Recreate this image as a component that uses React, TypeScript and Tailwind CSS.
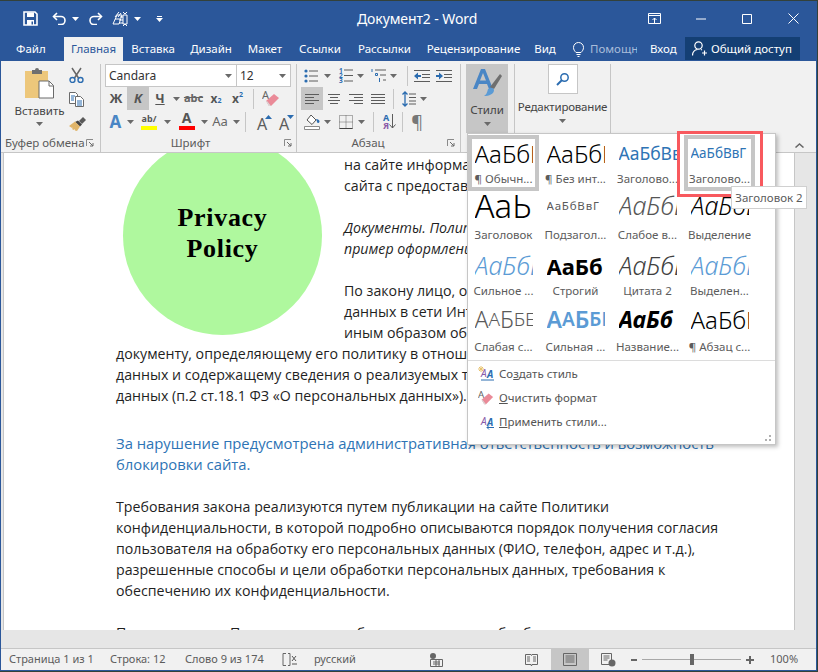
import type { ReactNode } from "react";

const UI = "font-['Noto_Sans',sans-serif]";

const Caret = ({ light = false }: { light?: boolean }) => (
  <svg width="7" height="4" viewBox="0 0 7 4" className="shrink-0">
    <path d="M0 0h7L3.5 4z" fill={light ? "#ffffff" : "#6a6a6a"} />
  </svg>
);

const Launcher = () => (
  <svg width="8" height="8" viewBox="0 0 8 8" className="shrink-0">
    <path d="M.5 7V.5H7" fill="none" stroke="#8a8a8a" />
    <path d="M3 3l4 4M7 4v3H4" fill="none" stroke="#6a6a6a" />
  </svg>
);

const Sep = ({ h = "h-[20px]" }: { h?: string }) => <div className={`w-px shrink-0 bg-[#c6c6c6] ${h}`} />;

function Lines({ kind }: { kind: "left" | "center" | "right" | "justify" }) {
  const rows: [number, number][] = {
    left: [[0, 14], [0, 9], [0, 14], [0, 9]],
    center: [[1, 13], [3, 11], [1, 13], [3, 11]],
    right: [[0, 14], [5, 14], [0, 14], [5, 14]],
    justify: [[0, 14], [0, 14], [0, 14], [0, 14]],
  }[kind] as [number, number][];
  return (
    <svg width="14" height="12" viewBox="0 0 14 12">
      {rows.map(([a, b], i) => (
        <path key={i} d={`M${a} ${1.5 + i * 3}H${b}`} stroke="#5c5c5c" />
      ))}
    </svg>
  );
}

const SaveIcon = () => (
  <svg width="15" height="15" viewBox="0 0 15 15">
    <path d="M1 1h11l2 2v11H1z" fill="none" stroke="#fff" strokeWidth="1.6" />
    <path d="M4 1.5h7V6H4zM4 9h7v5H4z" fill="#fff" />
    <path d="M8.5 10.5h1.5v3H8.5z" fill="#2b579a" />
  </svg>
);

const UndoIcon = () => (
  <svg width="15" height="13" viewBox="0 0 15 13">
    <path d="M5 1L1.5 4.5 5 8" fill="none" stroke="#fff" strokeWidth="1.6" />
    <path d="M2 4.5h7a4 4 0 0 1 0 8H6" fill="none" stroke="#fff" strokeWidth="1.6" />
  </svg>
);

const RedoIcon = () => (
  <svg width="15" height="13" viewBox="0 0 15 13">
    <path d="M10 1l3.5 3.5L10 8" fill="none" stroke="#fff" strokeWidth="1.6" />
    <path d="M13 4.5H6a4 4 0 0 0 0 8h3" fill="none" stroke="#fff" strokeWidth="1.6" />
  </svg>
);

const TouchIcon = () => (
  <svg width="18" height="16" viewBox="0 0 18 16">
    <path d="M1 13l4-9h5l-3 9zM3 8h5" fill="none" stroke="#fff" />
    <path d="M7 1L3 6M9 2L6 6" stroke="#fff" />
    <path d="M11 4h4v9h-4zM11 1l2 2 2-2M11 15l2-2 2 2" fill="none" stroke="#fff" />
    <path d="M8 6h3M7 9h4M7 12h4" stroke="#fff" />
  </svg>
);

const ScissorsIcon = () => (
  <svg width="15" height="16" viewBox="0 0 15 16">
    <path d="M3 1l6.5 10M12 1L5.500 11" stroke="#666" strokeWidth="1.500" />
    <circle cx="3.500" cy="13" r="2.500" fill="none" stroke="#2b6cb0" strokeWidth="1.400" />
    <circle cx="11.500" cy="13" r="2.500" fill="none" stroke="#2b6cb0" strokeWidth="1.400" />
  </svg>
);

const CopyIcon = () => (
  <svg width="15" height="15" viewBox="0 0 15 15">
    <path d="M.5.500h6l2 2v9H.500z" fill="#fff" stroke="#6a6a6a" />
    <path d="M6.500 4.500h5l3 3v7h-8z" fill="#fff" stroke="#6a6a6a" />
    <path d="M2 4h4M2 6h3M2 8h3M8 9h5M8 11h5M8 13h5" stroke="#2b6cb0" />
  </svg>
);

const PainterIcon = () => (
  <svg width="17" height="14" viewBox="0 0 17 14">
    <path d="M10 4l3 3 4-4-3-3z" fill="#5a5a5a" />
    <path d="M9 3.500l4 4-2 2L6 5z" fill="#444" />
    <path d="M6 4.500l5 5-3 4.500-2-.500-.500-1.500-1 1-1.500-1 1-1.500-1 .500L0 9z" fill="#e0b56a" />
  </svg>
);

const PasteIcon = () => (
  <svg width="29" height="31" viewBox="0 0 29 31">
    <path d="M0 3h23v27H0z" fill="#edc77b" />
    <path d="M7 2h3a2 2 0 0 1 4 0h3v4H7z" fill="#6f6f6f" />
    <path d="M14 13h10l4.500 4.500V30H14z" fill="#fff" stroke="#6a6a6a" />
    <path d="M24 13v5h4.500" fill="none" stroke="#6a6a6a" />
  </svg>
);

const Eraser = ({ size = 18 }: { size?: number }) => (
  <svg width={size} height={size} viewBox="0 0 18 18">
    <text x="0" y="9" fontSize="11" fontFamily="Noto Sans, sans-serif" fill="#666">A</text>
    <path d="M4 11l8-7 5 4-8 8H7z" fill="#ea8a98" />
    <path d="M4 11l3 5h2l-4-5z" fill="#d9d9d9" />
  </svg>
);

const GrowIcon = ({ up }: { up: boolean }) => (
  <div className="relative flex h-[22px] w-[20px] items-end justify-center pb-[1px] text-[16px] leading-none text-[#5c5c5c]">
    A
    <svg width="7" height="4" viewBox="0 0 7 4" className="absolute right-0 top-[4px]">
      <path d={up ? "M0 4h7L3.500 0z" : "M0 0h7L3.500 4z"} fill="#2b6cb0" />
    </svg>
  </div>
);

const BulletIcon = () => (
  <svg width="14" height="14" viewBox="0 0 14 14">
    <circle cx="2" cy="2" r="1.600" fill="#2b6cb0" />
    <circle cx="2" cy="7" r="1.600" fill="#2b6cb0" />
    <circle cx="2" cy="12" r="1.600" fill="#2b6cb0" />
    <path d="M5 2h9M5 7h9M5 12h9" stroke="#5c5c5c" />
  </svg>
);

const NumberIcon = () => (
  <div className="flex h-[15px] w-[14px] items-stretch justify-between">
    <div className="flex flex-col justify-between text-[6.500px] font-bold leading-[5px] text-[#2b6cb0]">
      <span>1</span>
      <span>2</span>
      <span>3</span>
    </div>
    <svg width="9" height="15" viewBox="0 0 9 15">
      <path d="M0 2h9M0 7.500h9M0 13h9" stroke="#5c5c5c" />
    </svg>
  </div>
);

const MultiIcon = () => (
  <svg width="15" height="15" viewBox="0 0 15 15">
    <path d="M1 1v3M4.500 5.500h2v2h-2zM8.500 10v4" stroke="#2b6cb0" fill="none" />
    <path d="M4 2h11M9 7h6M12 12h3" stroke="#5c5c5c" />
  </svg>
);

const IndentIcon = ({ out }: { out: boolean }) => (
  <svg width="16" height="12" viewBox="0 0 16 12">
    <path d="M0 .500h16M8 4.500h8M8 7.500h8M0 11.500h16" stroke="#5c5c5c" />
    {out ? (
      <path d="M0 6l4-3.500V5h3v2H4v2.500z" fill="#2b6cb0" />
    ) : (
      <path d="M7 6L3 2.500V5H0v2h3v2.500z" fill="#2b6cb0" />
    )}
  </svg>
);

const SpacingIcon = () => (
  <svg width="14" height="16" viewBox="0 0 14 16">
    <path d="M3 1v14M.500 3.500L3 1l2.500 2.500M.500 12.500L3 15l2.500-2.500" fill="none" stroke="#2b6cb0" strokeWidth="1.300" />
    <path d="M7 3h7M7 6.500h7M7 10h7M7 13h7" stroke="#5c5c5c" />
  </svg>
);

const ShadingIcon = () => (
  <svg width="16" height="16" viewBox="0 0 16 16">
    <path d="M3 6l4-5 5 5-4 4.500z" fill="#fff" stroke="#555" />
    <path d="M12 5c2 0 3.500 1 3.500 2.500 0 1-1 1.500-2 1.500z" fill="#2b6cb0" />
    <path d="M.500 12.500h15v3H.500z" fill="#fff" stroke="#8a8a8a" />
  </svg>
);

const BordersIcon = () => (
  <svg width="14" height="14" viewBox="0 0 14 14">
    <path d="M.500.500h13v13H.500zM7 .500v13M.500 7h13" fill="none" stroke="#666" strokeDasharray="1 1" />
    <path d="M.500 13.500h13" stroke="#444" />
  </svg>
);

const StylesIcon = () => (
  <svg width="29" height="32" viewBox="0 0 29 32">
    <path d="M0 21L8 1h4l8 20h-4l-2-5H6l-2 5zM7 12.500h6L10 5z" fill="#4a86c5" />
    <path d="M17 19L27 6l2 2-8 13z" fill="#6f6f6f" />
    <path d="M15 21c3-2 6-1 6 1 0 4-5 6-10 6 2-1 3-3 4-7z" fill="#5b9bd5" />
  </svg>
);

const SearchIcon = () => (
  <svg width="14" height="14" viewBox="0 0 14 14">
    <circle cx="8.500" cy="5.500" r="3.700" fill="none" stroke="#2b6cb0" strokeWidth="1.500" />
    <path d="M6 8l-5 5" stroke="#2b6cb0" strokeWidth="2" />
  </svg>
);

function FontGroup() {
  return (
    <div className="flex w-[196px] shrink-0 flex-col border-r border-[#c6c6c6] pl-[4px]">
      <div className="flex h-[23px]">
        <div className="flex h-[23px] w-[132px] items-center justify-between border border-[#c6c6c6] bg-white pl-[3px] pr-[4px] text-[12px] text-[#333]">
          Candara
          <Caret />
        </div>
        <div className="-ml-px flex h-[23px] w-[55px] items-center justify-between border border-[#c6c6c6] bg-white pl-[3px] pr-[4px] text-[12px] text-[#333]">
          12
          <Caret />
        </div>
      </div>
      <div className="flex h-[23px] items-center">
        <div className="flex h-full w-[22px] items-center justify-center text-[13px] font-bold text-[#555]">Ж</div>
        <div className="flex h-full w-[22px] items-center justify-center bg-[#c6c6c6] text-[13px] font-bold italic text-[#555]">К</div>
        <div className="flex h-full w-[22px] items-center justify-center text-[13px] font-bold text-[#555] underline">Ч</div>
        <div className="flex w-[10px] justify-center"><Caret /></div>
        <div className="flex h-full w-[25px] items-center justify-center text-[11px] font-bold text-[#666] line-through">abc</div>
        <div className="flex h-full w-[20px] items-center justify-center text-[12px] font-bold text-[#555]">
          x<span className="mt-[6px] text-[7px] text-[#2b6cb0]">2</span>
        </div>
        <div className="flex h-full w-[23px] items-center justify-center text-[12px] font-bold text-[#555]">
          x<span className="-mt-[6px] text-[7px] text-[#2b6cb0]">2</span>
        </div>
        <div className="ml-[4px] mr-[8px]"><Sep /></div>
        <Eraser />
      </div>
      <div className="flex h-[23px] items-center">
        <div className="flex h-full w-[21px] items-center justify-center text-[17px] font-bold text-[#4a86c5]">A</div>
        <div className="flex w-[8px] justify-center"><Caret /></div>
        <div className="flex h-full w-[30px] flex-col items-center justify-end pb-[3px]">
          <div className="flex h-[11px] items-center text-[9px] font-bold leading-none text-[#555]">ab/</div>
          <div className="mt-[2px] h-[4px] w-[16px] bg-[#ffff00]" />
        </div>
        <div className="flex w-[6px] justify-center"><Caret /></div>
        <div className="flex h-full w-[31px] flex-col items-center justify-end pb-[3px] pl-[2px]">
          <div className="text-[14px] font-bold leading-[14px] text-[#555]">A</div>
          <div className="mt-[1px] h-[4px] w-[16px] bg-[#ff0000]" />
        </div>
        <div className="flex w-[6px] justify-center"><Caret /></div>
        <div className="flex h-full w-[26px] items-center justify-center text-[13px] text-[#666]">Aa</div>
        <div className="flex w-[6px] justify-center"><Caret /></div>
        <div className="ml-[6px] mr-[6px]"><Sep /></div>
        <GrowIcon up />
        <div className="w-[2px]" />
        <GrowIcon up={false} />
      </div>
      <div className="mt-auto flex h-[18px] items-center">
        <span className="flex-1 pr-[8px] text-center text-[11.500px] text-[#5c5c5c]">Шрифт</span>
        <span className="pr-[4px]"><Launcher /></span>
      </div>
    </div>
  );
}

function ParagraphGroup() {
  return (
    <div className="flex w-[164px] shrink-0 flex-col border-r border-[#c6c6c6] pl-[4px]">
      <div className="flex h-[23px] items-center">
        <div className="flex w-[17px] justify-end"><BulletIcon /></div>
        <div className="flex w-[13px] justify-end"><Caret /></div>
        <div className="flex w-[22px] justify-end"><NumberIcon /></div>
        <div className="flex w-[11px] justify-end"><Caret /></div>
        <div className="flex w-[22px] justify-end"><MultiIcon /></div>
        <div className="flex w-[11px] justify-end"><Caret /></div>
        <div className="ml-[10px] mr-[6px]"><Sep /></div>
        <IndentIcon out />
        <div className="w-[6px]" />
        <IndentIcon out={false} />
      </div>
      <div className="flex h-[23px] items-center">
        <div className="flex h-full w-[22px] items-center justify-center bg-[#c6c6c6]"><Lines kind="left" /></div>
        <div className="flex h-full w-[22px] items-center justify-center"><Lines kind="center" /></div>
        <div className="flex h-full w-[22px] items-center justify-center"><Lines kind="right" /></div>
        <div className="flex h-full w-[22px] items-center justify-center"><Lines kind="justify" /></div>
        <div className="ml-[4px] mr-[8px]"><Sep /></div>
        <SpacingIcon />
        <div className="flex w-[11px] justify-end"><Caret /></div>
      </div>
      <div className="flex h-[23px] items-center">
        <div className="flex w-[19px] justify-end"><ShadingIcon /></div>
        <div className="flex w-[11px] justify-end"><Caret /></div>
        <div className="flex w-[22px] justify-end"><BordersIcon /></div>
        <div className="flex w-[12px] justify-end"><Caret /></div>
        <div className="ml-[8px] mr-[9px]"><Sep /></div>
        <div className="flex items-center">
          <div className="flex flex-col text-[9px] font-bold leading-[8px]">
            <span className="text-[#2b6cb0]">А</span>
            <span className="text-[#8a5aa8]">Я</span>
          </div>
          <svg width="7" height="15" viewBox="0 0 7 15">
            <path d="M3.500 0v14M.500 10.500l3 3.500 3-3.500" fill="none" stroke="#5c5c5c" />
          </svg>
        </div>
        <div className="ml-[6px] mr-[8px]"><Sep /></div>
        <span className="text-[18px] leading-none text-[#777]">¶</span>
      </div>
      <div className="mt-auto flex h-[18px] items-center">
        <span className="flex-1 pr-[12px] text-center text-[11.500px] text-[#5c5c5c]">Абзац</span>
        <span className="pr-[5px]"><Launcher /></span>
      </div>
    </div>
  );
}

function Ribbon() {
  return (
    <div className="flex h-[92px] shrink-0 border-b border-[#c6c6c6] bg-[#f1f1f1] pb-[0px] pt-[3px] text-[#444]">
      <div className="flex w-[100px] shrink-0 flex-col border-r border-[#c6c6c6]">
        <div className="flex h-[70px]">
          <div className="flex w-[66px] flex-col items-center pl-[11px] pt-[4px]">
            <PasteIcon />
            <span className="mt-[4px] text-[11.500px] leading-[16px]">Вставить</span>
            <span className="mt-[3px]"><Caret /></span>
          </div>
          <div className="flex flex-1 flex-col items-start gap-[9px] pl-[2px] pt-[3px]">
            <ScissorsIcon />
            <CopyIcon />
            <span className="mt-[1px]"><PainterIcon /></span>
          </div>
        </div>
        <div className="mt-auto flex h-[18px] items-center justify-between pl-[4px] pr-[6px]">
          <span className="whitespace-nowrap text-[11.500px] text-[#5c5c5c]">Буфер обмена</span>
          <Launcher />
        </div>
      </div>
      <FontGroup />
      <ParagraphGroup />
      <div className="flex w-[54px] shrink-0 flex-col border-r border-[#c6c6c6] pl-[5px]">
        <div className="flex h-[69px] w-[42px] flex-col items-center bg-[#c6c6c6] pt-[4px]">
          <StylesIcon />
          <span className="mt-[2px] text-[11.500px] leading-[16px]">Стили</span>
          <span className="mt-[4px]"><Caret /></span>
        </div>
      </div>
      <div className="flex w-[96px] shrink-0 flex-col items-center border-r border-[#c6c6c6]">
        <div className="flex h-[30px] w-[30px] items-center justify-center border border-[#c6c6c6] bg-white">
          <SearchIcon />
        </div>
        <span className="mt-[5px] text-[11.500px] leading-[16px] tracking-[-0.2px]">Редактирование</span>
        <span className="mt-[4px]"><Caret /></span>
      </div>
      <div className="flex flex-1 items-end justify-end pb-[4px] pr-[12px]">
        <svg width="9" height="5" viewBox="0 0 9 5">
          <path d="M.500 4.500l4-3.500 4 3.500" fill="none" stroke="#666" strokeWidth="1.500" />
        </svg>
      </div>
    </div>
  );
}

type Style = { sample: ReactNode; label: string; cls: string };

const STYLES: Style[] = [
  { sample: "АаБбВвГг", label: "¶ Обычн...", cls: "text-[24px] font-light text-black" },
  { sample: "АаБбВвГг", label: "¶ Без инт...", cls: "text-[24px] font-light text-black" },
  { sample: "АаБбВв", label: "Заголово...", cls: "text-[17.500px] text-[#2e74b5]" },
  { sample: "АаБбВвГ", label: "Заголово...", cls: "text-[13.500px] text-[#2e74b5]" },
  { sample: "АаЬ", label: "Заголовок", cls: "-mt-[4px] text-[33px] font-light text-black" },
  { sample: "АаБбВвГ", label: "Подзагол...", cls: "-mt-[4px] text-[11.500px] tracking-[0.8px] text-[#5a5a5a]" },
  { sample: "АаБбВв", label: "Слабое в...", cls: "-mt-[4px] text-[25px] font-light italic text-[#555]" },
  { sample: "АаБбВв", label: "Выделение", cls: "-mt-[4px] text-[25px] font-light italic text-black" },
  { sample: "АаБбВв", label: "Сильное ...", cls: "text-[25px] font-light italic text-[#5b9bd5]" },
  { sample: "АаБб", label: "Строгий", cls: "text-[22px] font-bold text-black" },
  { sample: "АаБбВв", label: "Цитата 2", cls: "text-[25px] font-light italic text-[#404040]" },
  { sample: "АаБбВв", label: "Выделен...", cls: "text-[25px] font-light italic text-[#5b9bd5]" },
  {
    sample: (
      <>
        А<span className="text-[19px]">А</span>Б<span className="text-[19px]">БЕ</span>
      </>
    ),
    label: "Слабая с...",
    cls: "-mt-[2px] text-[23px] font-light text-[#5a5a5a]",
  },
  {
    sample: (
      <>
        А<span className="text-[19px]">А</span>Б<span className="text-[19px]">БЕ</span>
      </>
    ),
    label: "Сильная ...",
    cls: "-mt-[2px] text-[23px] font-semibold text-[#5b9bd5]",
  },
  { sample: "АаБб", label: "Название...", cls: "-mt-[2px] text-[23px] font-bold italic text-black" },
  { sample: "АаБбВвГг", label: "¶ Абзац с...", cls: "-mt-[2px] text-[24px] font-light text-black" },
];

function StyleCell({ style, index }: { style: Style; index: number }) {
  const selected = index === 0;
  const hovered = index === 3;
  return (
    <div
      className={`relative flex h-[56px] w-[71px] flex-col items-center overflow-hidden px-[4px] pb-[1px] ${
        selected || hovered ? "border-[4px] border-[#c6c6c6]" : "border-[4px] border-transparent"
      }`}
    >
      <div className={`flex h-[29px] w-[58px] shrink-0 items-center overflow-hidden whitespace-nowrap leading-none ${style.cls}`}>
        {style.sample}
      </div>
      <div className="mt-auto w-[64px] whitespace-nowrap text-center text-[11.500px] leading-[15px] text-[#5c5c5c]">
        {style.label}
      </div>
    </div>
  );
}

function MenuItem({ icon, children }: { icon: ReactNode; children: ReactNode }) {
  return (
    <div className="flex h-[24px] items-center">
      <div className="flex w-[31px] justify-center pl-[4px]">{icon}</div>
      <span className="text-[11.500px] text-[#555]">{children}</span>
    </div>
  );
}

function StyleIcon({ badge }: { badge: "new" | "apply" }) {
  return (
    <svg width="16" height="16" viewBox="0 0 16 16">
      {badge === "new" && <path d="M3 0v6M0 3h6M1 1l4 4M5 1L1 5" stroke="#e8c26d" />}
      <text x="3" y="11" fontSize="10" fontStyle="italic" fill="#8a5aa8" fontFamily="Noto Sans, sans-serif">A</text>
      <text x="9" y="12" fontSize="10" fontWeight="700" fontStyle="italic" fill="#2b6cb0" fontFamily="Noto Sans, sans-serif">A</text>
      {badge === "new" ? (
        <path d="M3 14h13" stroke="#2b6cb0" />
      ) : (
        <path d="M16 13.500H9M11 11.500l-2 2 2 2" fill="none" stroke="#2b6cb0" />
      )}
    </svg>
  );
}

function Gallery() {
  return (
    <div className={`absolute left-[467px] top-[133px] z-10 w-[309px] border border-[#c6c6c6] bg-white shadow-[2px_2px_4px_rgba(0,0,0,0.25)] ${UI}`}>
      <div className="grid grid-cols-[72px_72px_72px_72px] gap-y-[0px] pt-[1px]">
        {STYLES.map((s, i) => (
          <StyleCell key={i} style={s} index={i} />
        ))}
      </div>
      <div className="mt-[1px] border-t border-[#dcdcdc] pb-[10px] pt-px">
        <MenuItem icon={<StyleIcon badge="new" />}>
          Со<span className="underline">з</span>дать стиль
        </MenuItem>
        <MenuItem icon={<Eraser size={16} />}>
          <span className="underline">О</span>чистить формат
        </MenuItem>
        <MenuItem icon={<StyleIcon badge="apply" />}>
          <span className="underline">П</span>рименить стили...
        </MenuItem>
      </div>
      <div className="absolute bottom-[3px] right-[4px] grid grid-cols-2 gap-[2px]">
        <span />
        <span className="h-[2px] w-[2px] bg-[#b0b0b0]" />
        <span className="h-[2px] w-[2px] bg-[#b0b0b0]" />
        <span className="h-[2px] w-[2px] bg-[#b0b0b0]" />
      </div>
      <div className="absolute left-[209px] top-[-3px] h-[66px] w-[86px] border-[3px] border-[#f8595e]" />
      <div className="absolute left-[263px] top-[52px] flex h-[23px] w-[76px] items-center justify-center border border-[#d0d0d0] bg-white text-[11.500px] text-[#5c5c5c]">
        Заголовок 2
      </div>
    </div>
  );
}

function Doc() {
  return (
    <div className="relative flex-1 overflow-hidden bg-[#e6e6e6] pl-[2px] pr-[21px]">
      <div className="h-[477px] overflow-hidden border-l border-r border-[#c6c6c6] bg-white pl-[112px] pt-px font-['Open_Sans',sans-serif] text-[14.200px] leading-[21px] text-[#1f1f1f] [&_p]:whitespace-nowrap">
        <div className="flex h-[189px]">
          <div className="w-[228px] shrink-0 pl-[7px]">
            <div className="-mt-[18px] flex h-[199px] w-[199px] flex-col items-center justify-center rounded-full bg-[#aff89e] pb-[5px] font-['Liberation_Serif',serif] text-[26px] font-bold leading-[31px] tracking-[0.7px] text-black">
              <span>Privacy</span>
              <span>Policy</span>
            </div>
          </div>
          <div>
            <p>на сайте информацию о своей деятельности и об</p>
            <p>сайта с предоставлением документов</p>
            <p>&nbsp;</p>
            <p className="italic">Документы. Политика конфиденциальности</p>
            <p className="italic">пример оформления документа</p>
            <p>&nbsp;</p>
            <p>По закону лицо, осуществляющее сбор</p>
            <p>данных в сети Интернет, обязано</p>
            <p>иным образом обеспечить доступ к</p>
          </div>
        </div>
        <p>документу, определяющему его политику в отношении обработки персональных</p>
        <p>данных и содержащему сведения о реализуемых требованиях к защите персональных</p>
        <p>данных (п.2 ст.18.1 ФЗ «О персональных данных»).</p>
        <p>&nbsp;</p>
        <p className="mt-[6px] text-[14.800px] text-[#2e74b5]">За нарушение предусмотрена административная ответственность и возможность</p>
        <p className="text-[14.800px] text-[#2e74b5]">блокировки сайта.</p>
        <p>&nbsp;</p>
        <p>Требования закона реализуются путем публикации на сайте Политики</p>
        <p>конфиденциальности, в которой подробно описываются порядок получения согласия</p>
        <p>пользователя на обработку его персональных данных (ФИО, телефон, адрес и т.д.),</p>
        <p>разрешенные способы и цели обработки персональных данных, требования к</p>
        <p>обеспечению их конфиденциальности.</p>
        <p>&nbsp;</p>
        <p>Прежде всего, в Политике должна быть указана цель обработки данных</p>
      </div>
    </div>
  );
}

function StatusBar() {
  return (
    <div className="flex h-[22px] shrink-0 items-center border-t border-[#c6c6c6] bg-[#f1f1f1] pl-[8px] text-[11px] text-[#5c5c5c]">
      <span className="w-[101px]">Страница 1 из 1</span>
      <span className="w-[75px]">Строка: 12</span>
      <span className="w-[97px]">Слово 9 из 174</span>
      <svg width="15" height="13" viewBox="0 0 15 13" className="mr-[17px]">
        <path d="M4 .500H1v12h3M6 .500h2v12H6" fill="none" stroke="#666" />
        <path d="M10 3l4 5M14 3l-4 5M10 11h5" stroke="#555" />
      </svg>
      <span className="w-[116px]">русский</span>
      <svg width="13" height="14" viewBox="0 0 13 14" className="mr-[82px]">
        <circle cx="3" cy="3" r="3" fill="#666" />
        <path d="M.500 6.500h12v7H.500zM3 9h7M3 11h7M6 7v6M9 7v6" fill="none" stroke="#666" />
      </svg>
      <svg width="13" height="14" viewBox="0 0 13 14" className="mr-[13px]">
        <path d="M.500 1.500h5.500l.500 1 .500-1h5.500v10H7l-.500 1.500-.500-1.500H.500z" fill="none" stroke="#666" />
        <path d="M2 4h3M2 6h3M2 8h3M8 4h3M8 6h3M8 8h3" stroke="#666" />
      </svg>
      <div className="flex h-full w-[38px] items-center justify-center bg-[#c6c6c6]">
        <svg width="14" height="13" viewBox="0 0 14 13">
          <path d="M.500.500h13v12H.500z" fill="none" stroke="#666" />
          <path d="M2.500 3h9M2.500 5h9M2.500 7h9M2.500 9h9" stroke="#666" />
        </svg>
      </div>
      <svg width="15" height="14" viewBox="0 0 15 14" className="ml-[12px] mr-[15px]">
        <path d="M.500.500h10v11H.500zM2.500 3h6M2.500 5h6M2.500 7h4" fill="none" stroke="#666" />
        <circle cx="11" cy="10" r="3.500" fill="#666" />
      </svg>
      <div className="h-[2px] w-[6px] bg-[#666]" />
      <div className="relative mx-[5px] h-px w-[99px] bg-[#a8a8a8]">
        <div className="absolute left-[48px] top-[-5px] h-[11px] w-[4px] bg-[#666]" />
      </div>
      <div className="relative h-[8px] w-[8px]">
        <div className="absolute left-0 top-[3px] h-[2px] w-[8px] bg-[#666]" />
        <div className="absolute left-[3px] top-0 h-[8px] w-[2px] bg-[#666]" />
      </div>
      <span className="ml-[16px]">100%</span>
    </div>
  );
}

const TABS: [string, string][] = [
  ["Вставка", "w-[60px]"],
  ["Дизайн", "w-[56px]"],
  ["Макет", "w-[52px]"],
  ["Ссылки", "w-[58px]"],
  ["Рассылки", "w-[71px]"],
  ["Рецензирование", "w-[107px]"],
  ["Вид", "w-[36px]"],
];

export default function App() {
  return (
    <div className={`relative flex h-[672px] w-[818px] flex-col overflow-hidden bg-[#33413a] pb-[1px] pt-px ${UI}`}>
      <div className="mr-px flex min-h-0 flex-1 flex-col border-b border-l border-r border-[#2b579a]">
        <div className="flex h-[35px] shrink-0 items-center bg-[#2b579a] text-white">
          <div className="flex w-[356px] shrink-0 items-center pl-[22px]">
            <div className="w-[29px]"><SaveIcon /></div>
            <UndoIcon />
            <span className="ml-[5px] mr-[9px]"><Caret light /></span>
            <RedoIcon />
            <span className="ml-[9px]"><TouchIcon /></span>
            <span className="ml-[4px]"><Caret light /></span>
            <span className="ml-[15px] flex flex-col items-center gap-[1px]">
              <span className="h-px w-[5px] bg-white" />
              <Caret light />
            </span>
          </div>
          <span className="w-[291px] shrink-0 text-[14px] tracking-[-0.1px]">Документ2 - Word</span>
          <svg width="13" height="12" viewBox="0 0 13 12" className="shrink-0">
            <path d="M.500.500h12v10H.500zM.500 2.500h12M6.500 10V5M4.500 7l2-2 2 2" fill="none" stroke="#fff" />
          </svg>
          <svg width="10" height="2" viewBox="0 0 10 2" className="ml-[35px] shrink-0"><path d="M0 1h10" stroke="#fff" /></svg>
          <svg width="10" height="10" viewBox="0 0 10 10" className="ml-[36px] shrink-0"><path d="M.500.500h9v9h-9z" fill="none" stroke="#fff" /></svg>
          <svg width="11" height="11" viewBox="0 0 11 11" className="ml-[36px] shrink-0"><path d="M.500.500l10 10M10.500.500l-10 10" stroke="#fff" /></svg>
        </div>
        <div className="flex h-[25px] shrink-0 items-end bg-[#2b579a] text-[11.500px] text-white">
          <div className="flex h-[24px] w-[63px] shrink-0 items-center pl-[15px]">Файл</div>
          <div className="flex h-[24px] w-[59px] shrink-0 items-center justify-center bg-[#f1f1f1] text-[#2b579a]">Главная</div>
          {TABS.map(([name, w]) => (
            <div key={name} className={`flex h-[24px] shrink-0 items-center justify-center ${w}`}>{name}</div>
          ))}
          <div className="flex h-[24px] w-[87px] shrink-0 items-center overflow-hidden">
            <svg width="11" height="15" viewBox="0 0 11 15" className="ml-[10px] mr-[6px] shrink-0">
              <path d="M3 10.500C1.500 9 .500 7.500.500 5.500a5 5 0 0 1 10 0c0 2-1 3.500-2.500 5zM3.500 12.500h4M4.500 14.500h2" fill="none" stroke="#fff" />
            </svg>
            <span className="w-[47px] overflow-hidden whitespace-nowrap text-[#a9bcd9]">Помощник</span>
          </div>
          <div className="flex h-[24px] w-[35px] shrink-0 items-center">Вход</div>
          <div className="mb-[1px] flex h-[23px] w-[115px] shrink-0 items-center bg-[#143f74] pl-[7px]">
            <svg width="15" height="15" viewBox="0 0 15 15" className="mr-[4px] shrink-0">
              <circle cx="6.500" cy="4.500" r="3.700" fill="none" stroke="#fff" strokeWidth="1.200" />
              <path d="M.500 14.500c0-3 2-5.500 5-6M9 8.500l1 .5M10 12h5M12.500 9.500v5" fill="none" stroke="#fff" strokeWidth="1.200" />
            </svg>
            <span className="whitespace-nowrap">Общий доступ</span>
          </div>
        </div>
        <Ribbon />
        <Doc />
        <StatusBar />
      </div>
      <Gallery />
    </div>
  );
}
